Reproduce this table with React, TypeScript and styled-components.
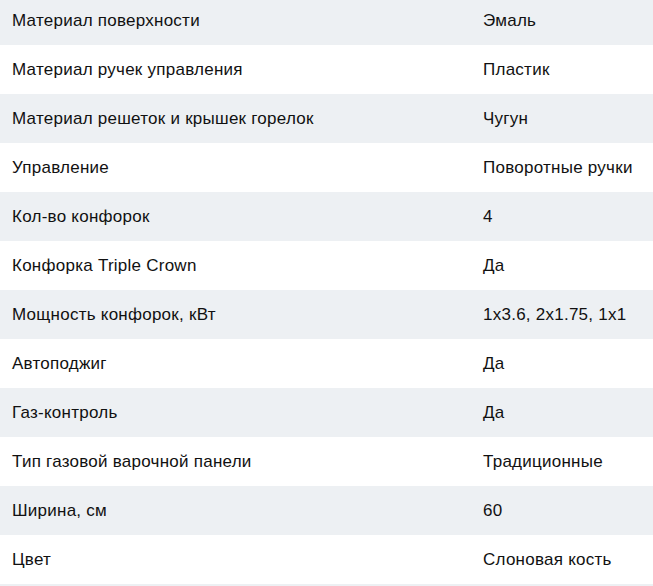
import styled, { createGlobalStyle } from "styled-components";

const GlobalStyle = createGlobalStyle`
  html, body {
    margin: 0;
    padding: 0;
    background: #fff;
  }
  body {
    font-family: "Liberation Sans", Arial, sans-serif;
    overflow: hidden;
  }
`;

const SpecsTable = styled.div`
  display: grid;
  grid-template-columns: 471px 1fr;
  margin-top: -4px;
  border-bottom: 4px solid #edf0f3;
`;

const Row = styled.div<{ $striped: boolean }>`
  display: contents;

  & > div {
    background: ${(p) => (p.$striped ? "#edf0f3" : "#fff")};
  }
`;

const Cell = styled.div`
  height: 49px;
  display: flex;
  align-items: center;
  padding-left: 12px;
  font-size: 17px;
  letter-spacing: 0.25px;
  color: #111;
  white-space: nowrap;
`;

const specs: [string, string][] = [
  ["Материал поверхности", "Эмаль"],
  ["Материал ручек управления", "Пластик"],
  ["Материал решеток и крышек горелок", "Чугун"],
  ["Управление", "Поворотные ручки"],
  ["Кол-во конфорок", "4"],
  ["Конфорка Triple Crown", "Да"],
  ["Мощность конфорок, кВт", "1x3.6, 2x1.75, 1x1"],
  ["Автоподжиг", "Да"],
  ["Газ-контроль", "Да"],
  ["Тип газовой варочной панели", "Традиционные"],
  ["Ширина, см", "60"],
  ["Цвет", "Слоновая кость"],
];

export default function App() {
  return (
    <>
      <GlobalStyle />
      <SpecsTable>
        {specs.map(([name, value], i) => (
          <Row key={name} $striped={i % 2 === 0}>
            <Cell>{name}</Cell>
            <Cell>{value}</Cell>
          </Row>
        ))}
      </SpecsTable>
    </>
  );
}
